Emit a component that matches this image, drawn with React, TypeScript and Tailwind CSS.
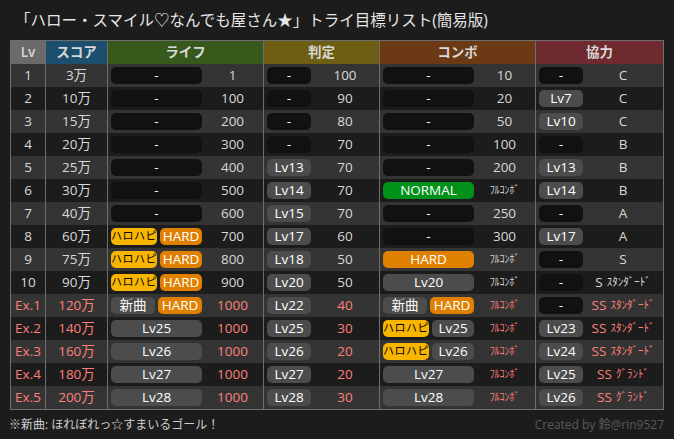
const FONT = "font-['Open_Sans','Noto_Sans_CJK_JP',sans-serif]";

type Badge = { t: string; k?: 'none' | 'lv' | 'hard' | 'hello' | 'new' | 'normal' };
type Row = {
  lv: string;
  score: string;
  life: Badge[];
  lifeV: string;
  judge: string;
  judgeV: string;
  combo: Badge[];
  comboV: string;
  coop: string;
  coopV: string;
  coopSub?: string;
};

const none: Badge[] = [{ t: '-', k: 'none' }];
const lv = (t: string): Badge[] => [{ t, k: 'lv' }];
const hh: Badge = { t: 'ハロハピ', k: 'hello' };
const hard: Badge = { t: 'HARD', k: 'hard' };
const newSong: Badge = { t: '新曲', k: 'new' };
const fc = 'ﾌﾙｺﾝﾎﾞ';

const rows: Row[] = [
  { lv: '1', score: '3万', life: none, lifeV: '1', judge: '-', judgeV: '100', combo: none, comboV: '10', coop: '-', coopV: 'C' },
  { lv: '2', score: '10万', life: none, lifeV: '100', judge: '-', judgeV: '90', combo: none, comboV: '20', coop: 'Lv7', coopV: 'C' },
  { lv: '3', score: '15万', life: none, lifeV: '200', judge: '-', judgeV: '80', combo: none, comboV: '50', coop: 'Lv10', coopV: 'C' },
  { lv: '4', score: '20万', life: none, lifeV: '300', judge: '-', judgeV: '70', combo: none, comboV: '100', coop: '-', coopV: 'B' },
  { lv: '5', score: '25万', life: none, lifeV: '400', judge: 'Lv13', judgeV: '70', combo: none, comboV: '200', coop: 'Lv13', coopV: 'B' },
  { lv: '6', score: '30万', life: none, lifeV: '500', judge: 'Lv14', judgeV: '70', combo: [{ t: 'NORMAL', k: 'normal' }], comboV: fc, coop: 'Lv14', coopV: 'B' },
  { lv: '7', score: '40万', life: none, lifeV: '600', judge: 'Lv15', judgeV: '70', combo: none, comboV: '250', coop: '-', coopV: 'A' },
  { lv: '8', score: '60万', life: [hh, hard], lifeV: '700', judge: 'Lv17', judgeV: '60', combo: none, comboV: '300', coop: 'Lv17', coopV: 'A' },
  { lv: '9', score: '75万', life: [hh, hard], lifeV: '800', judge: 'Lv18', judgeV: '50', combo: [hard], comboV: fc, coop: '-', coopV: 'S' },
  { lv: '10', score: '90万', life: [hh, hard], lifeV: '900', judge: 'Lv20', judgeV: '50', combo: lv('Lv20'), comboV: fc, coop: '-', coopV: 'S', coopSub: 'ｽﾀﾝﾀﾞｰﾄﾞ' },
  { lv: 'Ex.1', score: '120万', life: [newSong, hard], lifeV: '1000', judge: 'Lv22', judgeV: '40', combo: [newSong, hard], comboV: fc, coop: '-', coopV: 'SS', coopSub: 'ｽﾀﾝﾀﾞｰﾄﾞ' },
  { lv: 'Ex.2', score: '140万', life: lv('Lv25'), lifeV: '1000', judge: 'Lv25', judgeV: '30', combo: [hh, { t: 'Lv25', k: 'lv' }], comboV: fc, coop: 'Lv23', coopV: 'SS', coopSub: 'ｽﾀﾝﾀﾞｰﾄﾞ' },
  { lv: 'Ex.3', score: '160万', life: lv('Lv26'), lifeV: '1000', judge: 'Lv26', judgeV: '20', combo: [hh, { t: 'Lv26', k: 'lv' }], comboV: fc, coop: 'Lv24', coopV: 'SS', coopSub: 'ｽﾀﾝﾀﾞｰﾄﾞ' },
  { lv: 'Ex.4', score: '180万', life: lv('Lv27'), lifeV: '1000', judge: 'Lv27', judgeV: '20', combo: lv('Lv27'), comboV: fc, coop: 'Lv25', coopV: 'SS', coopSub: 'ｸﾞﾗﾝﾄﾞ' },
  { lv: 'Ex.5', score: '200万', life: lv('Lv28'), lifeV: '1000', judge: 'Lv28', judgeV: '30', combo: lv('Lv28'), comboV: fc, coop: 'Lv26', coopV: 'SS', coopSub: 'ｸﾞﾗﾝﾄﾞ' },
];

const badgeClass = {
  none: 'bg-[#111111] text-white',
  lv: 'bg-[#4c4c4c] text-white',
  hard: 'bg-[#e08000] text-white',
  hello: 'bg-[#f7b500] text-black text-[11px] tracking-[0.5px]',
  new: 'bg-[#4c4c4c] text-white',
  normal: 'bg-[#00911a] text-white',
};

const BadgeBox = ({ b }: { b: Badge }) => (
  <span className={`flex-1 h-[17px] rounded-[5px] flex items-center justify-center whitespace-nowrap ${badgeClass[b.k ?? 'lv']}`}>
    {b.t}
  </span>
);

const Value = ({ v, className = '' }: { v: string; className?: string }) =>
  v === fc ? (
    <span className={`text-[11px] scale-x-90 ${className}`}>{v}</span>
  ) : (
    <span className={className}>{v}</span>
  );

const Head = ({ label, className }: { label: string; className: string }) => (
  <div className={`flex items-center justify-center h-[23px] font-semibold text-[#d8d8d8] ${className}`}>{label}</div>
);

export default function App() {
  return (
    <div className={`w-[674px] h-[439px] bg-[#1c1c1c] overflow-hidden text-[13.5px] text-[#d8d8d8] ${FONT}`}>
      <h1 className="h-[40px] pl-[15px] pt-[10px] text-[15.5px] leading-[21px] font-normal text-[#e6e6e6] whitespace-nowrap">
        「ハロー・スマイル♡なんでも屋さん★」トライ目標リスト(簡易版)
      </h1>
      <div className="ml-[10px] w-[654px] border border-[#6e6e6e]">
        <div className="grid grid-cols-[34px_62px_156px_116px_156px_1fr]">
          <Head label="Lv" className="bg-[#6a6a6a]" />
          <Head label="スコア" className="bg-[#1c4f6e] border-l border-[#6e6e6e]" />
          <Head label="ライフ" className="bg-[#38591c] border-l border-[#6e6e6e]" />
          <Head label="判定" className="bg-[#6e5e14] border-l border-[#6e6e6e]" />
          <Head label="コンボ" className="bg-[#6b3a14] border-l border-[#6e6e6e]" />
          <Head label="協力" className="bg-[#6e2a2e] border-l border-[#6e6e6e]" />
        </div>
        {rows.map((r, i) => {
          const ex = i >= 10;
          const red = ex ? 'text-[#ff8078]' : '';
          return (
            <div
              key={r.lv}
              className={`grid grid-cols-[34px_62px_156px_116px_156px_1fr] h-[23px] items-stretch ${i % 2 === 0 ? 'bg-[#343434]' : 'bg-[#1c1c1c]'}`}
            >
              <div className={`flex items-center justify-center ${red}`}>{r.lv}</div>
              <div className={`flex items-center justify-center border-l border-[#6e6e6e] ${red}`}>{r.score}</div>
              <div className="flex items-center border-l border-[#6e6e6e] pl-[3px]">
                <div className="w-[91px] flex gap-[3px]">
                  {r.life.map((b, j) => <BadgeBox key={j} b={b} />)}
                </div>
                <Value v={r.lifeV} className={`flex-1 text-center ${red}`} />
              </div>
              <div className="flex items-center border-l border-[#6e6e6e] pl-[3px]">
                <div className="w-[44px] flex">
                  <BadgeBox b={{ t: r.judge, k: r.judge === '-' ? 'none' : 'lv' }} />
                </div>
                <Value v={r.judgeV} className={`flex-1 text-center ${red}`} />
              </div>
              <div className="flex items-center border-l border-[#6e6e6e] pl-[3px]">
                <div className="w-[91px] flex gap-[3px]">
                  {r.combo.map((b, j) => <BadgeBox key={j} b={b} />)}
                </div>
                <Value v={r.comboV} className={`flex-1 text-center ${red}`} />
              </div>
              <div className="flex items-center border-l border-[#6e6e6e] pl-[3px]">
                <div className="w-[44px] flex">
                  <BadgeBox b={{ t: r.coop, k: r.coop === '-' ? 'none' : 'lv' }} />
                </div>
                <span className={`flex-1 flex items-center justify-center gap-[4px] whitespace-nowrap ${red}`}>
                  {r.coopV}
                  {r.coopSub && <span className="text-[11px]">{r.coopSub}</span>}
                </span>
              </div>
            </div>
          );
        })}
      </div>
      <div className="flex justify-between items-center ml-[9px] w-[655px] h-[29px] text-[12px]">
        <span className="text-[#cfcfcf]">※新曲: ほれぼれっ☆すまいるゴール！</span>
        <span className="text-[#5a5a5a]">Created by 鈴@rin9527</span>
      </div>
    </div>
  );
}
